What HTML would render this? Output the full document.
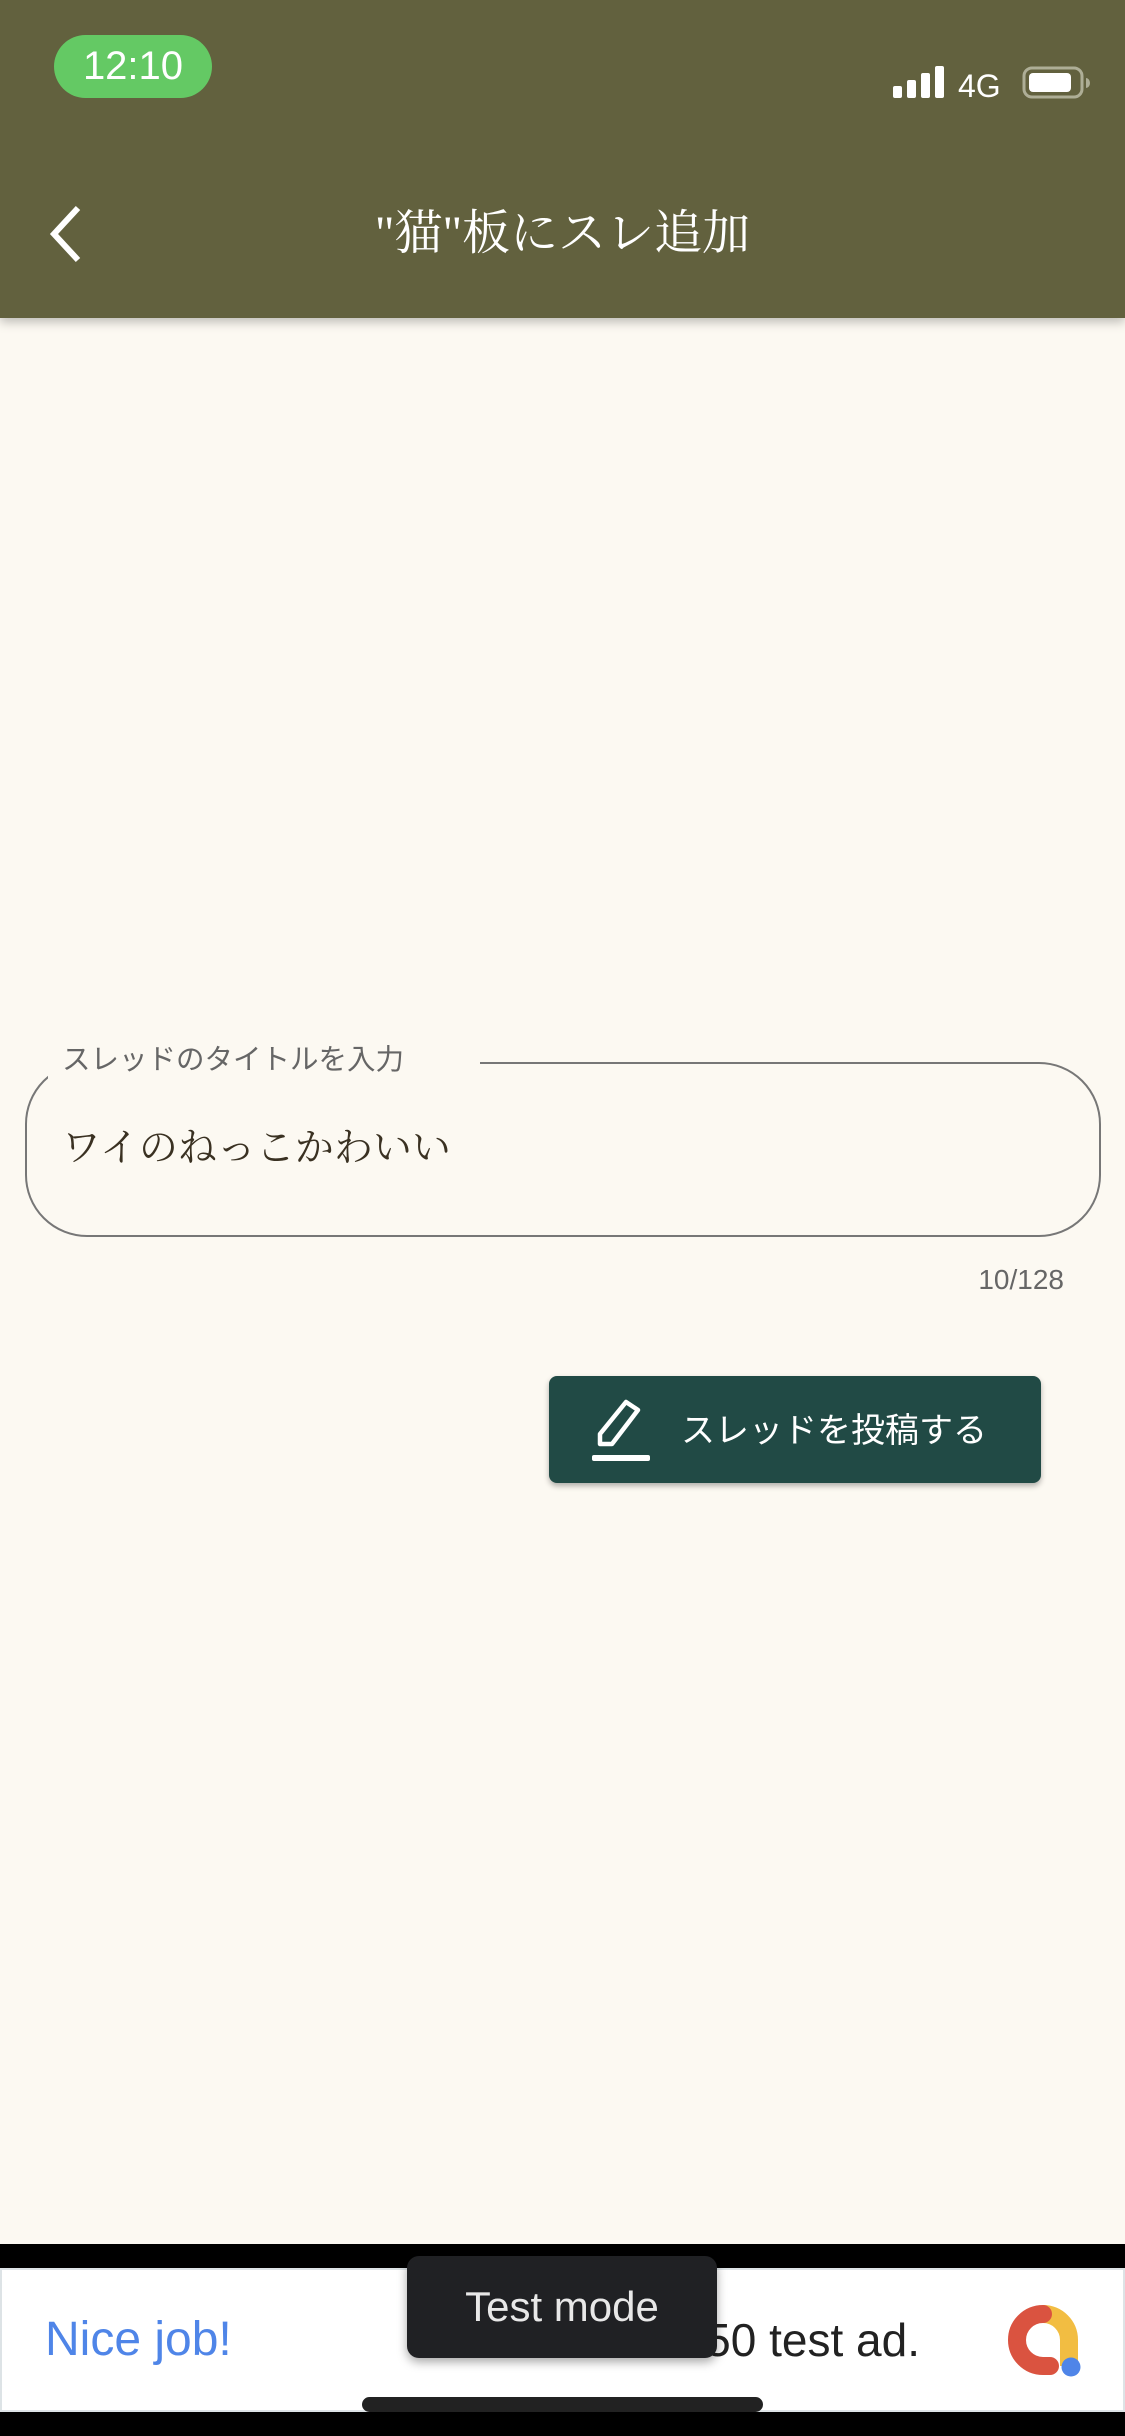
<!DOCTYPE html>
<html><head><meta charset="utf-8"><style>
*{margin:0;padding:0;box-sizing:border-box}
body{width:1125px;height:2436px;background:#fcf9f2;position:relative;overflow:hidden;font-family:"Liberation Sans","Noto Sans CJK JP",sans-serif}
.abs{position:absolute}
</style></head><body>
<div class="abs" style="left:0;top:0;width:1125px;height:318px;background:#62613e;box-shadow:0 4px 10px rgba(0,0,0,0.25)"></div>
<div class="abs" style="left:54px;top:35px;width:158px;height:63px;border-radius:32px;background:#64c964;color:#fff;font-size:40px;line-height:63px;text-align:center">12:10</div>
<svg class="abs" style="left:890px;top:64px" width="200" height="38" viewBox="0 0 200 38">
<rect x="3" y="22" width="9" height="12" rx="2" fill="#fff"/>
<rect x="17" y="16" width="9" height="18" rx="2" fill="#fff"/>
<rect x="31" y="9" width="9" height="25" rx="2" fill="#fff"/>
<rect x="45" y="2" width="9" height="32" rx="2" fill="#fff"/>
<text x="68" y="33" fill="#fff" font-family="Liberation Sans" font-size="32">4G</text>
<rect x="134" y="4" width="58" height="29" rx="8" fill="none" stroke="#aeae96" stroke-width="3"/>
<rect x="139" y="9" width="42" height="19" rx="4" fill="#fff"/>
<path d="M196 14 a4 5 0 0 1 0 10z" fill="#aeae96"/>
</svg>
<svg class="abs" style="left:44px;top:202px" width="44" height="64" viewBox="0 0 44 64"><path d="M34 6 L10 32 L34 58" fill="none" stroke="#fff" stroke-width="6"/></svg>
<div class="abs" style="left:0;top:203px;width:1125px;text-align:center;color:#fff;font-family:'Liberation Serif','Noto Serif CJK SC',serif;font-size:48px;line-height:62px">"猫"板にスレ追加</div>

<div class="abs" style="left:25px;top:1062px;width:1076px;height:175px;border:2px solid #777;border-radius:62px"></div>
<div class="abs" style="left:48px;top:1040px;width:432px;height:40px;background:#fcf9f2"></div>
<div class="abs" style="left:62px;top:1042px;font-size:28.5px;color:#666;line-height:36px;font-family:'Liberation Sans','Noto Sans CJK JP',sans-serif">スレッドのタイトルを入力</div>
<div class="abs" style="left:62px;top:1122px;font-size:39px;color:#3a3122;line-height:54px;font-family:'Liberation Serif','Noto Serif CJK SC',serif">ワイのねっこかわいい</div>
<div class="abs" style="left:900px;top:1263px;width:164px;text-align:right;font-size:28px;color:#666;line-height:34px">10/128</div>

<div class="abs" style="left:549px;top:1376px;width:492px;height:107px;background:#214a45;border-radius:8px;box-shadow:0 3px 6px rgba(0,0,0,0.3)"></div>
<svg class="abs" style="left:588px;top:1396px" width="70" height="72" viewBox="0 0 70 72">
<path d="M12 48 L12 38 L38 6 L50 14 L24 48 Z" fill="none" stroke="#fff" stroke-width="4.5" stroke-linejoin="round"/>
<rect x="4" y="59" width="58" height="6" rx="2" fill="#fff"/>
</svg>
<div class="abs" style="left:681px;top:1408px;font-size:34px;color:#fff;line-height:46px">スレッドを投稿する</div>

<div class="abs" style="left:0;top:2244px;width:1125px;height:192px;background:#000"></div>
<div class="abs" style="left:0;top:2268px;width:1125px;height:144px;background:#fff;border:2px solid #dde3e6"></div>
<div class="abs" style="left:45px;top:2310px;font-size:48px;color:#4f85e8;line-height:60px">Nice job!</div>
<div class="abs" style="left:395px;top:2310px;width:525px;text-align:right;font-size:46px;color:#222;line-height:60px">This is a 320x50 test ad.</div>
<svg class="abs" style="left:1004px;top:2302px" width="80" height="80" viewBox="0 0 80 80">
<path d="M39 12 A26 26 0 0 1 65 38 L65 64" fill="none" stroke="#f2bd42" stroke-width="18"/>
<path d="M39 12 A26 26 0 0 0 39 64 L46 64" fill="none" stroke="#da5340" stroke-width="18" stroke-linecap="round"/>
<circle cx="67" cy="65" r="9.5" fill="#4f85e8"/>
</svg>
<div class="abs" style="left:407px;top:2256px;width:310px;height:102px;background:#202124;border-radius:12px;box-shadow:0 4px 10px rgba(0,0,0,0.35);color:#e8e8e8;font-size:42px;text-align:center;line-height:102px">Test mode</div>
<div class="abs" style="left:362px;top:2397px;width:401px;height:15px;background:#222;border-radius:8px"></div>
</body></html>
